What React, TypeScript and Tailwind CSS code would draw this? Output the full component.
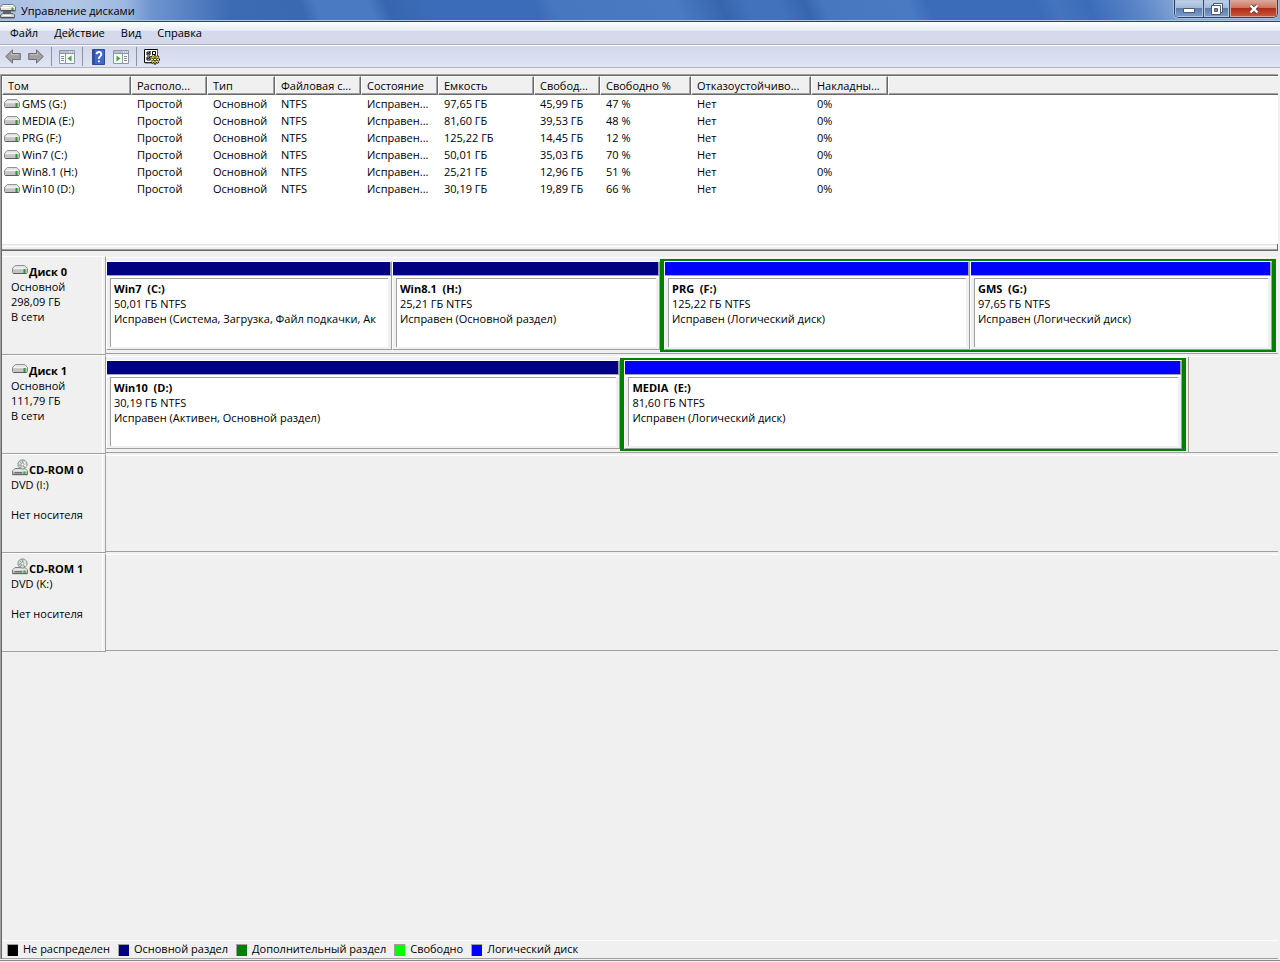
import type { ReactNode } from 'react'
import clsx from 'clsx'

// ─── Data ─────────────────────────────────────────────────────────────────────

const MENU = ['Файл', 'Действие', 'Вид', 'Справка']

const COLUMNS = [
  { label: 'Том', width: 'w-[129px]' },
  { label: 'Располо...', width: 'w-[76px]' },
  { label: 'Тип', width: 'w-[68px]' },
  { label: 'Файловая с...', width: 'w-[86px]' },
  { label: 'Состояние', width: 'w-[77px]' },
  { label: 'Емкость', width: 'w-[96px]' },
  { label: 'Свобод...', width: 'w-[66px]' },
  { label: 'Свободно %', width: 'w-[91px]' },
  { label: 'Отказоустойчиво...', width: 'w-[120px]' },
  { label: 'Накладны...', width: 'w-[77px]' },
]

const VOLUMES = [
  { name: 'GMS (G:)', size: '97,65 ГБ', free: '45,99 ГБ', percent: '47 %' },
  { name: 'MEDIA (E:)', size: '81,60 ГБ', free: '39,53 ГБ', percent: '48 %' },
  { name: 'PRG (F:)', size: '125,22 ГБ', free: '14,45 ГБ', percent: '12 %' },
  { name: 'Win7 (C:)', size: '50,01 ГБ', free: '35,03 ГБ', percent: '70 %' },
  { name: 'Win8.1 (H:)', size: '25,21 ГБ', free: '12,96 ГБ', percent: '51 %' },
  { name: 'Win10 (D:)', size: '30,19 ГБ', free: '19,89 ГБ', percent: '66 %' },
]

type Partition = { name: string; size: string; status: string; share: number }

type Disk = {
  name: string
  lines: string[]
  optical?: boolean
  width?: string
  primary?: Partition[]
  extended?: Partition[]
  extendedShare?: number
}

const DISKS: Disk[] = [
  {
    name: 'Диск 0',
    lines: ['Основной', '298,09 ГБ', 'В сети'],
    width: 'w-full',
    primary: [
      { name: 'Win7  (C:)', size: '50,01 ГБ NTFS', status: 'Исправен (Система, Загрузка, Файл подкачки, Ак', share: 286 },
      { name: 'Win8.1  (H:)', size: '25,21 ГБ NTFS', status: 'Исправен (Основной раздел)', share: 268 },
    ],
    extendedShare: 608,
    extended: [
      { name: 'PRG  (F:)', size: '125,22 ГБ NTFS', status: 'Исправен (Логический диск)', share: 306 },
      { name: 'GMS  (G:)', size: '97,65 ГБ NTFS', status: 'Исправен (Логический диск)', share: 302 },
    ],
  },
  {
    name: 'Диск 1',
    lines: ['Основной', '111,79 ГБ', 'В сети'],
    width: 'w-[92.4%]',
    primary: [
      { name: 'Win10  (D:)', size: '30,19 ГБ NTFS', status: 'Исправен (Активен, Основной раздел)', share: 514 },
    ],
    extendedShare: 557,
    extended: [
      { name: 'MEDIA  (E:)', size: '81,60 ГБ NTFS', status: 'Исправен (Логический диск)', share: 557 },
    ],
  },
  { name: 'CD-ROM 0', lines: ['DVD (I:)', '\u00a0', 'Нет носителя'], optical: true },
  { name: 'CD-ROM 1', lines: ['DVD (K:)', '\u00a0', 'Нет носителя'], optical: true },
]

const LEGEND = [
  { label: 'Не распределен', color: 'bg-black' },
  { label: 'Основной раздел', color: 'bg-[#000080]' },
  { label: 'Дополнительный раздел', color: 'bg-[#008000]' },
  { label: 'Свободно', color: 'bg-[#00ff00]' },
  { label: 'Логический диск', color: 'bg-[#0000ff]' },
]

// ─── Icons ────────────────────────────────────────────────────────────────────

function DriveIcon() {
  return (
    <svg width="16" height="10" viewBox="0 0 16 10" className="shrink-0" aria-hidden="true">
      <path d="M3.2.6h9.600l2.700 2.800v3.800q0 1.300-1.400 1.300H1.900Q.5 8.500.5 7.200V3.400z" fill="#e9e9e9" stroke="#8a8a8a" />
      <path d="M1 3.600h14v3.600q0 .8-1 .8H2q-1 0-1-.8z" fill="#c4c4c4" />
      <path d="M1.500 3.700h13" stroke="#f8f8f8" />
      <path d="M1.500 8.500h13" stroke="#5c5c5c" />
      <path d="M12.500 4v4" stroke="#2f9a2f" strokeWidth="2" />
    </svg>
  )
}

function OpticalIcon() {
  return (
    <svg width="16" height="17" viewBox="0 0 16 17" className="shrink-0" aria-hidden="true">
      <path d="M3 9.500h10l2.500 2.500v3.500H.500V12z" fill="#dedede" stroke="#7c7c7c" />
      <circle cx="10.500" cy="5.500" r="4.600" fill="#d9dcdf" stroke="#85898d" />
      <path d="M10.500 1.300l.5 3M7.800 2.500l1.800 2M6.500 6.500l3-.8" stroke="#6fae7c" />
      <path d="M13.800 3l-2.300 2M14.500 7.300l-2.700-1" stroke="#f9f9f9" />
      <path d="M8 9l1.500-2M12.800 9l-1.300-2" stroke="#8c9297" />
      <circle cx="10.500" cy="5.500" r="1.400" fill="#fff" stroke="#888" strokeWidth=".7" />
      <path d="M1 12h14v3.500H1z" fill="#b9b9b9" />
      <path d="M1 12h14" stroke="#f5f5f5" />
      <path d="M2.500 13.800h7.500" stroke="#555" />
      <path d="M.500 15.700h15" stroke="#5f5f5f" />
      <path d="M11.500 12.500h2v2.500h-2z" fill="#3bb33b" />
    </svg>
  )
}

function AppIcon() {
  return (
    <svg width="16" height="16" viewBox="0 0 16 16" className="shrink-0" aria-hidden="true">
      <path d="M2.500 1.500h10.500l2.500 2.500v4H.500V4z" fill="#e2e2e2" stroke="#77797c" />
      <path d="M3 2.500h10" stroke="#fff" />
      <path d="M.500 4.500h14.500" stroke="#fff" />
      <path d="M1 7.500h14" stroke="#4f5256" />
      <path d="M12.500 4.500v2.500" stroke="#3a9d3a" strokeWidth="2" />
      <path d="M3 8h8v3H3z" fill="#5d646d" />
      <path d="M2.500 10.500h10.500l1.500 1.500v3H.500v-3z" fill="#cfcfcf" stroke="#5f6368" />
      <path d="M3 12.500h8" stroke="#fff" />
      <path d="M1 14.500h13" stroke="#4f5256" />
    </svg>
  )
}

function ArrowIcon({ right = false }: { right?: boolean }) {
  return (
    <svg width="16" height="15" viewBox="0 0 16 15" aria-hidden="true">
      <path
        d={right ? 'M15.300 7.500L8.500.9v3.600H.7v6h7.800v3.600z' : 'M.7 7.500L7.500.9v3.600h7.800v6H7.500v3.600z'}
        fill="#a0a0a0"
        stroke="#6e6e6e"
        strokeLinejoin="round"
      />
      <path d={right ? 'M2 5.700h7.500V3.500' : 'M14 5.700H6.500V3.500'} fill="none" stroke="#c0c0c0" />
    </svg>
  )
}

function PaneIcon({ right = false }: { right?: boolean }) {
  return (
    <svg width="16" height="14" viewBox="0 0 16 14" aria-hidden="true">
      <path d="M.5.5h15v13H.5z" fill="#f7f9fb" stroke="#8d97a3" />
      <path d="M1 1h14v2H1z" fill="#b4bfcb" />
      <path d="M10 2h1M12 2h1M14 2h1" stroke="#fff" />
      <path d="M.500 3.500h15" stroke="#8d97a3" />
      {right ? (
        <>
          <path d="M9.500 4v9" stroke="#8d97a3" />
          <path d="M11 6.500h3M11 8.500h3M11 10.500h3" stroke="#7c8da0" />
          <path d="M3.500 5.500v6L7.500 8.500z" fill="#3fae2f" />
        </>
      ) : (
        <>
          <path d="M6.500 4v9" stroke="#8d97a3" />
          <path d="M2 6.500h3M2 8.500h3M2 10.500h3" stroke="#7c8da0" />
          <path d="M12.500 5.500v6L8.500 8.500z" fill="#3fae2f" />
        </>
      )}
    </svg>
  )
}

function HelpIcon() {
  return (
    <svg width="13" height="16" viewBox="0 0 13 16" aria-hidden="true">
      <path d="M.5.5h12v15H.5z" fill="#4169cb" stroke="#2d4a9c" />
      <path d="M1 1h2v14H1z" fill="#2f50ad" />
      <path d="M4.500 5.200Q4.800 3 7 3t2.300 2.200Q9.300 6.600 8 7.500T6.900 10" fill="none" stroke="#fff" strokeWidth="1.800" />
      <path d="M6 11.400h1.900v1.900H6z" fill="#fff" />
    </svg>
  )
}

function SettingsIcon() {
  return (
    <svg width="16" height="16" viewBox="0 0 16 16" aria-hidden="true">
      <path d="M.5.5h13v13H.5z" fill="#fff" stroke="#000" />
      <path d="M13.500 1v13H1" fill="none" stroke="#555" />
      <path d="M3 3h3v3H3zM3 8h3v3H3z" fill="#fff" stroke="#000" />
      <path d="M3.500 4l1 1 2-3M3.500 9l1 1 2-3" fill="none" stroke="#000" />
      <path d="M8.500 2.500h3v3h-3z" fill="#fff" stroke="#000" />
      <path d="M11 6v9.500M6.500 10.500h9.500M7.500 7l7 7M14.500 7l-7 7" stroke="#000" strokeWidth="2.200" />
      <path d="M11 6.500v8M7 10.500h8M8 7.500l6 6M14 7.500l-6 6" stroke="#f4e842" strokeWidth="1.400" />
      <circle cx="11" cy="10.500" r="1.500" fill="#fff" stroke="#000" />
    </svg>
  )
}

// ─── Window chrome ────────────────────────────────────────────────────────────

function TitleBar() {
  return (
    <header className="flex h-[22px] items-start justify-between border-b border-[#26437a] bg-[linear-gradient(90deg,#a9bfe2_0,#b4c8e7_70px,#9db8e0_125px,#7095d0_150px,transparent_230px),linear-gradient(68deg,#4472bb_0,#3a69b1_23.800%,#4a7ac2_25%,#4a7ac2_29.200%,#3766ae_30.500%,#3a6db9_34%,#3a6db9_42%,#4777bf_43.500%,#4a7ac2_53%,#3766ae_56.500%,#4272bb_58.500%,#4272bb_61%,#3766ae_63%,#4777bf_64.500%,#4a7ac2_71%,#3a6db9_72.500%,#3a6db9_81%,#4474bd_82.500%,#3a6db9_85%,#5d87c8_89%,#86a6d6_92%,#8dacd9_100%)] shadow-[inset_0_-1px_0_#a9c3e8]">
      <div className="flex items-center gap-[5px] pt-[3px]">
        <AppIcon />
        <h1 className="leading-[16px]">Управление дисками</h1>
      </div>
      <div className="mr-[2px] flex h-[18px] overflow-hidden rounded-b-[5px] border border-t-0 border-[#2b3f66] shadow-[0_0_0_1px_#a7bfe2]">
        <button aria-label="Свернуть" className="flex w-[29px] items-center justify-center border-r border-[#34496f] bg-[linear-gradient(#c3d2e8_0,#a4b9d9_45%,#5b7cae_50%,#7e9fcd_100%)] shadow-[inset_0_0_0_1px_#b4c7e2]">
          <svg width="12" height="6" viewBox="0 0 12 6" className="mt-[4px]" aria-hidden="true">
            <path d="M.5.5h11v4H.5z" fill="#fff" stroke="#4b5a72" />
          </svg>
        </button>
        <button aria-label="Восстановить" className="flex w-[26px] items-center justify-center border-r border-[#34496f] bg-[linear-gradient(#c3d2e8_0,#a4b9d9_45%,#5b7cae_50%,#7e9fcd_100%)] shadow-[inset_0_0_0_1px_#b4c7e2]">
          <svg width="12" height="12" viewBox="0 0 12 12" aria-hidden="true">
            <path d="M2.500.5h9v9h-9z" fill="#fff" stroke="#4b5a72" />
            <path d="M.500 2.500h9v9h-9z" fill="#fff" stroke="#4b5a72" />
            <path d="M3.500 5.500h3v3h-3z" fill="#6f8fc0" stroke="#4b5a72" />
          </svg>
        </button>
        <button aria-label="Закрыть" className="flex w-[47px] items-center justify-center bg-[linear-gradient(#e0a89c_0,#cf7464_45%,#b02c18_50%,#cf5a3c_100%)] shadow-[inset_0_0_0_1px_#dba49a]">
          <svg width="12" height="10" viewBox="0 0 12 10" aria-hidden="true">
            <path d="M2.500 1.500l7 7M9.500 1.500l-7 7" stroke="#5c4346" strokeWidth="4" />
            <path d="M2.500 1.500l7 7M9.500 1.500l-7 7" stroke="#fff" strokeWidth="2.400" />
          </svg>
        </button>
      </div>
    </header>
  )
}

function ToolButton({ label, children }: { label: string; children: ReactNode }) {
  return (
    <button aria-label={label} className="flex w-[16px] items-center justify-center">
      {children}
    </button>
  )
}

function Divider() {
  return <span className="h-[19px] w-px bg-[#8b93a1]" />
}

function Toolbar() {
  return (
    <div className="flex h-[23px] items-center border-t border-b border-t-white border-b-[#b0b6bf] bg-linear-to-b from-[#d3d8ea] to-[#dfe5f5] pl-[5px]">
      <div className="flex gap-[7px]">
        <ToolButton label="Назад"><ArrowIcon /></ToolButton>
        <ToolButton label="Вперед"><ArrowIcon right /></ToolButton>
      </div>
      <div className="flex items-center gap-[7px] pl-[7px]">
        <Divider />
        <ToolButton label="Дерево консоли"><PaneIcon /></ToolButton>
        <Divider />
        <ToolButton label="Справка"><HelpIcon /></ToolButton>
        <ToolButton label="Панель действий"><PaneIcon right /></ToolButton>
        <Divider />
        <ToolButton label="Параметры"><SettingsIcon /></ToolButton>
      </div>
    </div>
  )
}

// ─── Volume list ──────────────────────────────────────────────────────────────

function VolumeTable() {
  return (
    <div className="h-[168px] overflow-hidden bg-white">
      <table className="w-full table-fixed border-separate border-spacing-0">
        <thead>
          <tr>
            {COLUMNS.map((c) => (
              <th
                key={c.label}
                className={clsx(
                  c.width,
                  'h-[19px] overflow-hidden border-t border-r border-b border-l border-t-white border-r-[#696969] border-b-[#696969] border-l-white bg-[#f0f0f0] p-0 pl-[5px] text-left leading-[16px] font-normal whitespace-nowrap shadow-[inset_-1px_-1px_0_#a0a0a0]',
                )}
              >
                {c.label}
              </th>
            ))}
            <td className="border-t border-b border-l border-t-white border-b-[#696969] border-l-white bg-[#f0f0f0] p-0 shadow-[inset_0_-1px_0_#a0a0a0]" />
          </tr>
        </thead>
        <tbody>
          {VOLUMES.map((v) => (
            <tr key={v.name} className="h-[17px] leading-[17px] whitespace-nowrap [&>td]:p-0 [&>td]:pl-[6px]">
              <th className="p-0 pl-[2px] text-left font-normal">
                <span className="flex items-center gap-[2px]">
                  <DriveIcon />
                  {v.name}
                </span>
              </th>
              <td>Простой</td>
              <td>Основной</td>
              <td>NTFS</td>
              <td>Исправен...</td>
              <td>{v.size}</td>
              <td>{v.free}</td>
              <td>{v.percent}</td>
              <td>Нет</td>
              <td>0%</td>
              <td />
            </tr>
          ))}
        </tbody>
      </table>
    </div>
  )
}

// ─── Disk map ─────────────────────────────────────────────────────────────────

function PartitionBox({ part, bar }: { part: Partition; bar: string }) {
  return (
    <div
      className="flex min-w-0 basis-0 flex-col border-t border-r border-b border-l border-t-white border-r-[#a0a0a0] border-b-[#a0a0a0] border-l-white"
      style={{ flexGrow: part.share }}
    >
      <div className={clsx('h-[13px] border-r border-[#a0a0a0]', bar)} />
      <div className="h-px bg-[#a0a0c0]" />
      <div className="h-[2px] bg-white" />
      <div className="mr-[3px] mb-[2px] ml-[3px] flex-1 overflow-hidden border-t border-l border-[#a0a0a0] bg-white pt-[2px] pl-[3px] leading-[15px]">
        <p className="overflow-hidden font-bold whitespace-pre">{part.name}</p>
        <p className="overflow-hidden whitespace-nowrap">{part.size}</p>
        <p className="overflow-hidden whitespace-nowrap">{part.status}</p>
      </div>
    </div>
  )
}

function DiskRow({ disk }: { disk: Disk }) {
  return (
    <section className="flex h-[99px]">
      <div className="flex w-[104px] shrink-0 border-t border-r border-b border-t-white border-r-[#a0a0a0] border-b-[#a0a0a0]">
        <div className="mr-[2px] flex-1 border-r border-white pt-[7px] pl-[9px] leading-[15px] whitespace-nowrap">
          <h2 className="flex h-[15px] items-end font-bold">
            <span className={clsx('flex w-[18px] justify-center', disk.optical ? 'pb-px' : 'pb-[4px]')}>
              {disk.optical ? <OpticalIcon /> : <DriveIcon />}
            </span>
            {disk.name}
          </h2>
          {disk.lines.map((line, i) => (
            <p key={i}>{line}</p>
          ))}
        </div>
      </div>
      <div className="mt-px mb-px flex-1 border-t border-b border-t-white border-b-[#a0a0a0]">
        {disk.primary && disk.extended && (
          <div
            className={clsx(
              'flex h-[95px] border-[#a0a0a0] pt-[1px] pr-[2px] pb-[1px]',
              disk.width,
              disk.width !== 'w-full' && 'border-r',
            )}
          >
            <div className="flex min-w-0 basis-0 py-[2px]" style={{ flexGrow: disk.primary.reduce((sum, p) => sum + p.share, 0) }}>
              {disk.primary.map((p) => (
                <PartitionBox key={p.name} part={p} bar="bg-[#000080]" />
              ))}
            </div>
            <div
              className="flex min-w-0 basis-0 border-x-4 border-y-2 border-[#008000]"
              style={{ flexGrow: disk.extendedShare }}
            >
              {disk.extended.map((p) => (
                <PartitionBox key={p.name} part={p} bar="bg-[#0000ff]" />
              ))}
            </div>
          </div>
        )}
      </div>
    </section>
  )
}

// ─── App ──────────────────────────────────────────────────────────────────────

export default function App() {
  return (
    <div className="flex min-h-screen flex-col bg-[#f0f0f0] font-['Open_Sans','Noto_Sans',sans-serif] text-[11px] text-black">
      <TitleBar />

      <nav className="flex h-[23px] items-center gap-[16px] border-b border-[#a9b0bb] bg-[linear-gradient(#ffffff_0,#e4ebf5_9px,#d4d9eb_9px,#d4d9eb_100%)] pl-[10px]">
        {MENU.map((item) => (
          <button key={item}>{item}</button>
        ))}
      </nav>

      <Toolbar />

      <main className="mt-[6px] mr-[2px] flex flex-1 flex-col border-t border-l border-[#a0a0a0]">
        <div className="flex flex-1 flex-col border-t border-l border-[#696969]">
          <VolumeTable />
          <div className="h-[7px] border-r border-b border-[#696969] bg-[linear-gradient(#e3e3e3_0,#e3e3e3_1px,#f0f0f0_1px,#f0f0f0_2px,#fff_2px,#fff_3px,#f0f0f0_3px,#f0f0f0_5px,#a0a0a0_5px)]" />

          <div className="flex-1 pt-[5px]">
            {DISKS.map((d) => (
              <DiskRow key={d.name} disk={d} />
            ))}
          </div>

          <footer className="flex h-[19px] items-center gap-[8px] border-t border-b border-t-white border-b-[#a0a0a0] pl-[5px]">
            {LEGEND.map((l) => (
              <span key={l.label} className="flex items-center gap-[5px] whitespace-nowrap">
                <span className={clsx('h-[12px] w-[11px] border-t border-l border-[#a0a0a0]', l.color)} />
                {l.label}
              </span>
            ))}
          </footer>
        </div>
      </main>
      <div className="mt-px h-[2px] border-t border-[#8a8a8a]" />
    </div>
  )
}
